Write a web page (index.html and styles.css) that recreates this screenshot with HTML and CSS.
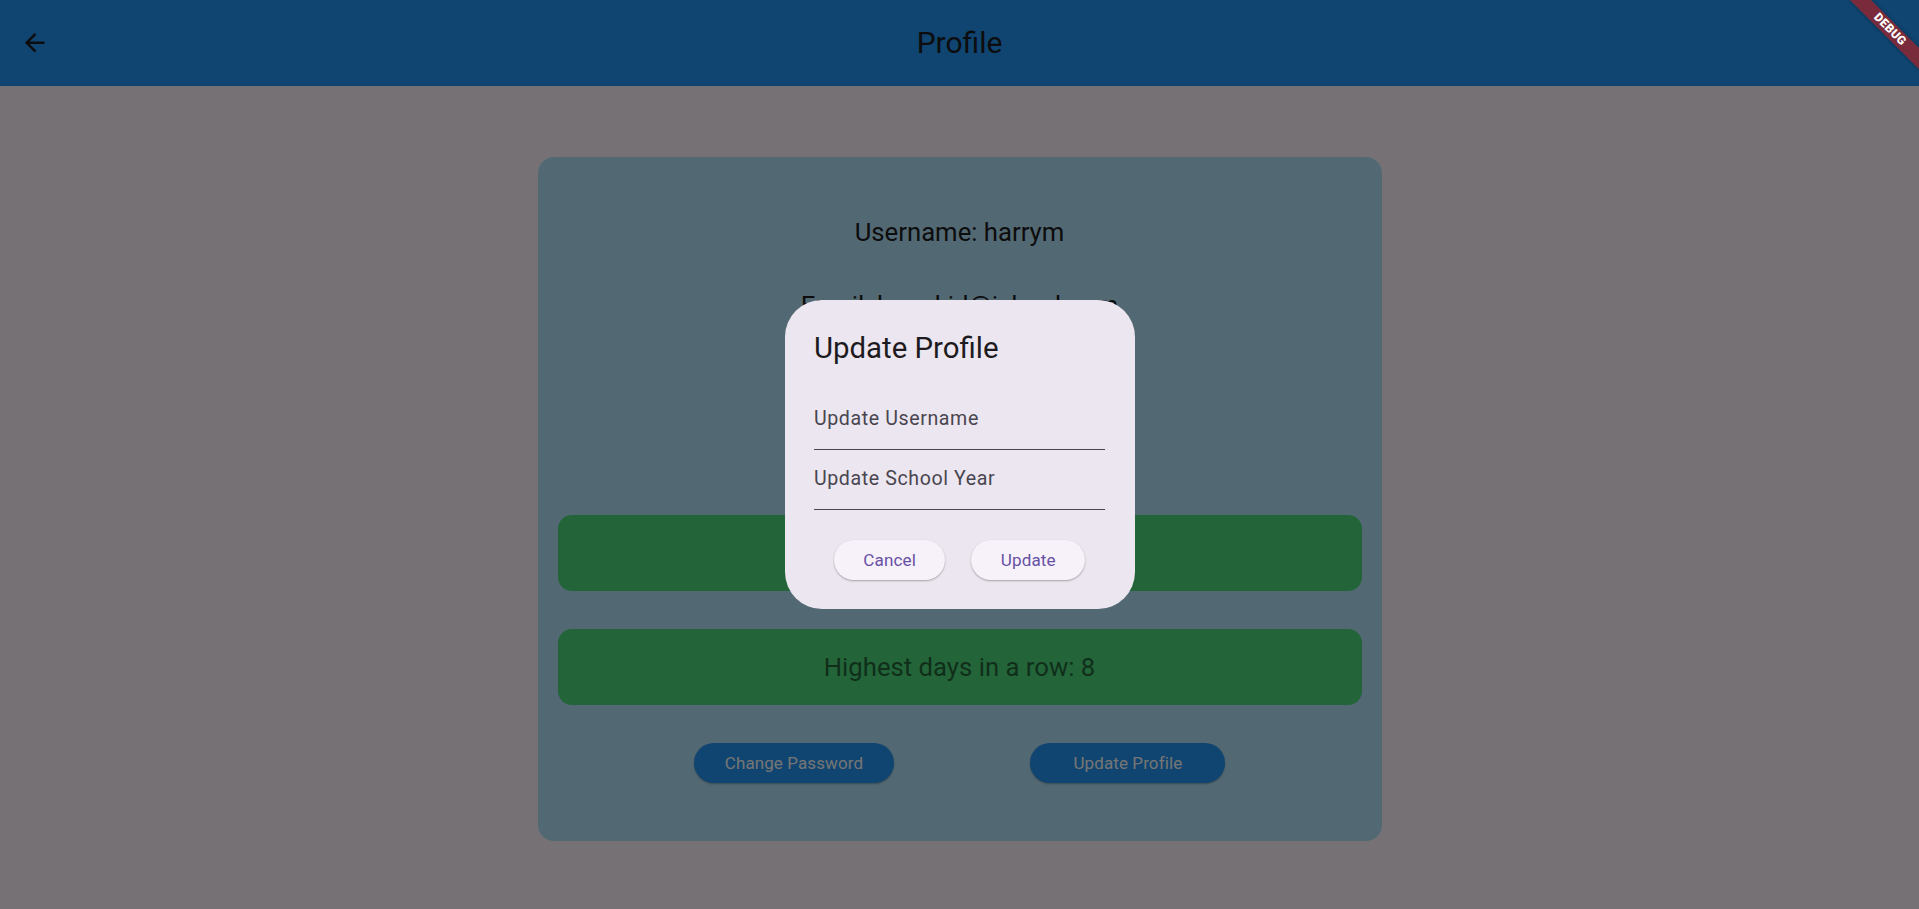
FILE: index.html
```html
<!DOCTYPE html>
<html lang="en">
<head>
<meta charset="utf-8">
<title>Profile</title>
<link rel="stylesheet" href="styles.css">
</head>
<body>
  <header class="appbar">
    <button class="back" aria-label="Back">
      <svg viewBox="0 0 24 24" width="29.4" height="29.4"><path d="M20 11H7.83l5.59-5.59L12 4l-8 8 8 8 1.41-1.41L7.83 13H20v-2z" fill="currentColor"/></svg>
    </button>
    <h1 class="title">Profile</h1>
    <div class="spacer"></div>
  </header>

  <main class="content">
    <section class="card">
      <p class="info">Username: harrym</p>
      <p class="info">Email: harrykid@icloud.com</p>
      <p class="info">School Year: 12</p>
      <div class="stat stat-first"></div>
      <div class="stat">Highest days in a row: 8</div>
      <div class="card-actions">
        <button class="pill">Change Password</button>
        <button class="pill pill-wide">Update Profile</button>
      </div>
    </section>
  </main>

  <div class="scrim">
    <div class="dialog" role="dialog">
      <h2 class="dialog-title">Update Profile</h2>
      <div class="field"><span class="field-label">Update Username</span></div>
      <div class="field"><span class="field-label">Update School Year</span></div>
      <div class="dialog-actions">
        <button class="text-btn">Cancel</button>
        <button class="text-btn">Update</button>
      </div>
    </div>
  </div>

  <div class="debug-banner"><span>DEBUG</span></div>
</body>
</html>
```

FILE: styles.css
```css
html, body {
  margin: 0;
  padding: 0;
}
body {
  width: 1919px;
  height: 909px;
  overflow: hidden;
  background: #fef7ff;
  font-family: Roboto, "Noto Sans", sans-serif;
  color: #1d1b20;
  position: relative;
}
button {
  font-family: inherit;
  border: none;
  cursor: pointer;
}

.appbar {
  height: 86px;
  background: #2196f3;
  display: grid;
  grid-template-columns: 1fr auto 1fr;
  align-items: center;
}
.back {
  justify-self: start;
  margin-left: 20px;
  width: 29.4px;
  height: 29.4px;
  padding: 0;
  background: none;
  color: #1d1b20;
  display: flex;
}
.title {
  margin: 0;
  font-size: 30px;
  line-height: 36px;
  font-weight: 400;
}

.content {
  display: flex;
  justify-content: center;
  padding-top: 71px;
}
.card {
  width: 844px;
  height: 684px;
  box-sizing: border-box;
  background: #b3e5fc;
  border-radius: 16px;
  padding: 59px 20px 0;
  display: flex;
  flex-direction: column;
}
.info {
  margin: 0 0 41px;
  font-size: 25.7px;
  line-height: 32px;
  text-align: center;
}
.stat {
  height: 76px;
  border-radius: 14px;
  background: #4cd97c;
  display: flex;
  align-items: center;
  justify-content: center;
  font-size: 25.7px;
  line-height: 32px;
  color: rgba(0, 0, 0, 0.55);
  margin-bottom: 38px;
}
.stat-first {
  margin-top: 80px;
}
.card-actions {
  display: flex;
  justify-content: space-evenly;
}
.pill {
  height: 40px;
  padding: 0 31px;
  border-radius: 20px;
  background: #2196f3;
  color: #ffffff;
  font-size: 17px;
  font-weight: 400;
  letter-spacing: 0.1px;
  box-shadow: 0 1px 2px rgba(0, 0, 0, 0.3);
}
.pill-wide {
  padding: 0 43px;
}

.scrim {
  position: absolute;
  inset: 0;
  background: rgba(0, 0, 0, 0.54);
  display: flex;
  align-items: center;
  justify-content: center;
}
.dialog {
  width: 350px;
  box-sizing: border-box;
  padding: 29.4px;
  border-radius: 37px;
  background: #ece6f0;
}
.dialog-title {
  margin: 0 0 21.6px;
  font-size: 29.4px;
  line-height: 39.2px;
  font-weight: 400;
  color: #1d1b20;
}
.field {
  height: 60px;
  box-sizing: border-box;
  border-bottom: 1px solid #49454f;
  padding-top: 14.6px;
}
.field-label {
  display: block;
  font-size: 19.6px;
  line-height: 29.4px;
  letter-spacing: 0.6px;
  color: #49454f;
}
.dialog-actions {
  margin-top: 30px;
  display: flex;
  justify-content: center;
  gap: 26px;
}
.text-btn {
  height: 40px;
  padding: 0 29.4px;
  border-radius: 20px;
  background: #f7f2fa;
  color: #6750a4;
  font-size: 17.1px;
  font-weight: 400;
  letter-spacing: 0.12px;
  box-shadow: 0 1px 2px rgba(0, 0, 0, 0.3);
}

.debug-banner {
  position: absolute;
  left: 1840.6px;
  top: 22px;
  width: 98px;
  height: 14.7px;
  background: rgba(183, 28, 28, 0.63);
  transform: rotate(45deg);
  display: flex;
  align-items: center;
  justify-content: center;
  box-shadow: 0 0 4px rgba(0, 0, 0, 0.35);
}
.debug-banner span {
  font-size: 12px;
  line-height: 12px;
  font-weight: 900;
  color: #ffffff;
  letter-spacing: 0.3px;
}
```
